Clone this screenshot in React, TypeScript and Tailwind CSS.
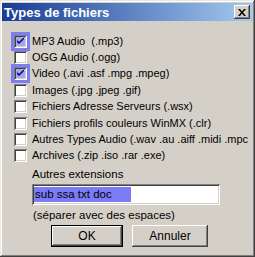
import React from "react";

const raised =
  "shadow-[inset_-1px_-1px_#404040,inset_1px_1px_#ffffff,inset_-2px_-2px_#808080,inset_2px_2px_#d4d0c8]";
const sunken =
  "shadow-[inset_1px_1px_#808080,inset_-1px_-1px_#ffffff,inset_2px_2px_#404040,inset_-2px_-2px_#d4d0c8]";

const items = [
  { label: "MP3 Audio  (.mp3)", checked: true },
  { label: "OGG Audio (.ogg)", checked: false },
  { label: "Video (.avi .asf .mpg .mpeg)", checked: true },
  { label: "Images (.jpg .jpeg .gif)", checked: false },
  { label: "Fichiers Adresse Serveurs (.wsx)", checked: false },
  { label: "Fichiers profils couleurs WinMX (.clr)", checked: false },
  { label: "Autres Types Audio (.wav .au .aiff .midi .mpc", checked: false },
  { label: "Archives (.zip .iso .rar .exe)", checked: false },
];

const CheckBox = ({ checked }: { checked: boolean }) => (
  <div
    className={`w-[13px] h-[13px] shrink-0 flex items-center justify-center ${sunken} ${
      checked ? "bg-[#a4a4f6] ring-[3px] ring-[#7d7df2]" : "bg-white"
    }`}
  >
    {checked && (
      <svg width="7" height="7" viewBox="0 0 7 7">
        <path d="M0 2 L0 4 L2 6 L7 1 L7 -1 L2 4 Z" fill="#0a0a3c" />
      </svg>
    )}
  </div>
);

export default function App() {
  return (
    <div className="w-[255px] h-[257px] bg-[#d4d0c8] p-[2px] flex flex-col text-black font-['Liberation_Sans',Arial,sans-serif] shadow-[inset_-1px_-1px_#404040,inset_1px_1px_#e8e6e0,inset_-2px_-2px_#808080,inset_2px_2px_#ffffff]">
      <div className="h-[18px] mt-[1px] flex items-center justify-between pl-[2px] pr-[3px] bg-gradient-to-r from-[#1c3a94] to-[#a6caf0]">
        <span className="text-white font-bold text-[13px] leading-none">
          Types de fichiers
        </span>
        <div
          className={`w-[16px] h-[14px] bg-[#d4d0c8] flex items-center justify-center ${raised}`}
        >
          <svg width="8" height="7" viewBox="0 0 8 7">
            <path
              d="M0 0h2l2 2.5L6 0h2L5 3.5 8 7H6L4 4.5 2 7H0l3-3.5z"
              fill="#000"
            />
          </svg>
        </div>
      </div>

      <div className="flex flex-col mt-[12px] pl-[12px]">
        {items.map((it) => (
          <div key={it.label} className="h-[16.4px] flex items-center gap-[5px]">
            <CheckBox checked={it.checked} />
            <span className="text-[11px] leading-none whitespace-pre">
              {it.label}
            </span>
          </div>
        ))}
      </div>

      <div className="pl-[30px] flex flex-col">
        <span className="text-[11.5px] leading-none mt-[5px]">Autres extensions</span>
        <div
          className={`mt-[3px] w-[188px] h-[21px] bg-white flex items-center pl-[2px] ${sunken}`}
        >
          <span className="w-[97px] h-[15px] bg-[#7b7bf6] text-[11.5px] leading-[15px] pl-[1px]">
            sub ssa txt doc
          </span>
        </div>
        <span className="text-[11.5px] leading-none mt-[5px] pl-[1px]">
          (séparer avec des espaces)
        </span>
      </div>

      <div className="flex gap-[9px] pl-[49px] mt-[4px]">
        <div className="w-[72px] h-[22px] border border-black">
          <div
            className={`w-full h-full bg-[#d4d0c8] flex items-center justify-center text-[12px] ${raised}`}
          >
            OK
          </div>
        </div>
        <div
          className={`w-[76px] h-[22px] bg-[#d4d0c8] flex items-center justify-center text-[12px] ${raised}`}
        >
          Annuler
        </div>
      </div>
    </div>
  );
}
